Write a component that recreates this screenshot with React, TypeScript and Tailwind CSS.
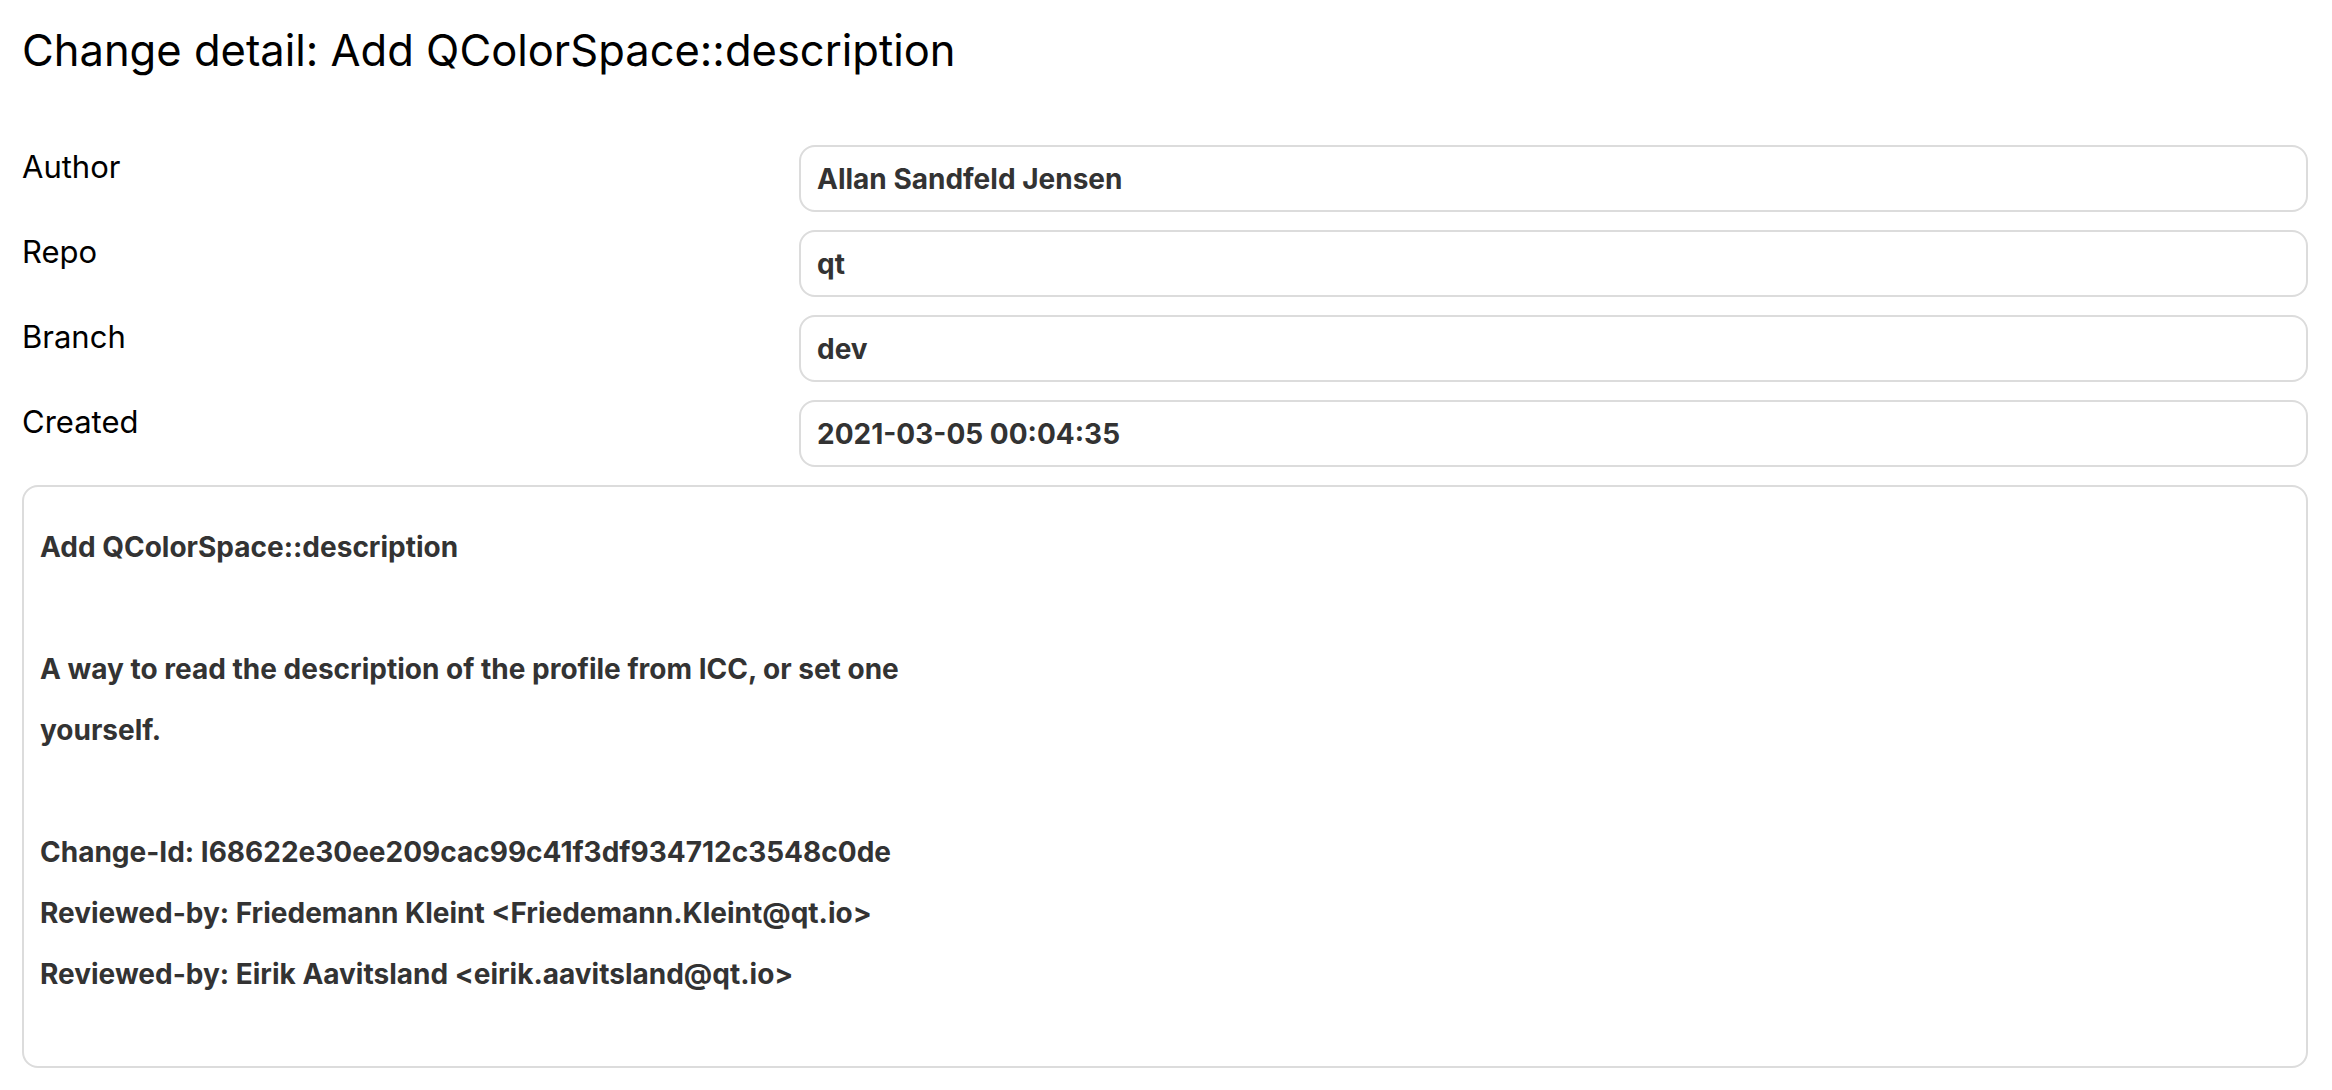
import React from "react";

// --- DỮ LIỆU ---
const fields = [
  { label: "Author", value: "Allan Sandfeld Jensen" },
  { label: "Repo", value: "qt" },
  { label: "Branch", value: "dev" },
  { label: "Created", value: "2021-03-05 00:04:35" },
];

const messageLines = [
  "Add QColorSpace::description",
  "",
  "A way to read the description of the profile from ICC, or set one",
  "yourself.",
  "",
  "Change-Id: I68622e30ee209cac99c41f3df934712c3548c0de",
  "Reviewed-by: Friedemann Kleint <Friedemann.Kleint@qt.io>",
  "Reviewed-by: Eirik Aavitsland <eirik.aavitsland@qt.io>",
];

const App = () => {
  return (
    <div className="min-h-screen bg-white pl-[22px] pr-[24px] pt-[25px] font-['Inter','Liberation_Sans',sans-serif]">
      <h1 className="text-[43.5px] leading-[50px] font-normal text-black">
        Change detail: Add QColorSpace::description
      </h1>

      <div className="mt-[70px] flex flex-col gap-[18px]">
        {fields.map((f) => (
          <div key={f.label} className="grid grid-cols-[777px_1fr]">
            <div className="pt-[4px] text-[31px] leading-[36px] text-black">{f.label}</div>
            <div className="h-[67px] rounded-[16px] border-2 border-[#dcdcdc] px-[16px] pt-[2px] text-[28px] leading-[61px] font-bold text-[#333333]">
              {f.value}
            </div>
          </div>
        ))}

        {/* KHUNG COMMIT MESSAGE */}
        <div className="rounded-[16px] border-2 border-[#dcdcdc] px-[16px] pt-[30px] pb-[61px] text-[28px] leading-[61px] font-bold text-[#333333]">
          {messageLines.map((line, i) => (
            <div key={i} className="whitespace-pre">
              {line === "" ? "\u00a0" : line}
            </div>
          ))}
        </div>
      </div>
    </div>
  );
};

export default App;
